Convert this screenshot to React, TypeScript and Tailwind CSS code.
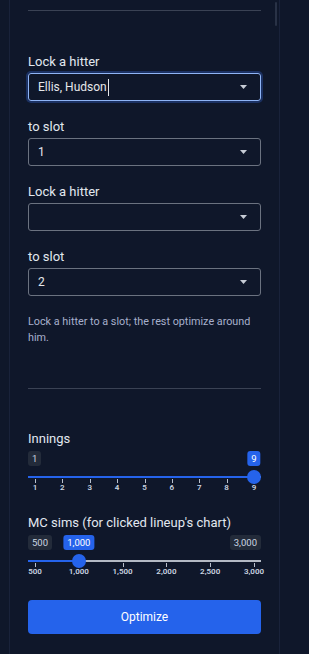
import React from "react";

const font = { fontFamily: "Roboto, 'Noto Sans', sans-serif" };

function Caret() {
  return (
    <svg width="7" height="4" viewBox="0 0 7 4" className="shrink-0">
      <path d="M0 0 L7 0 L3.5 4 Z" fill="#c7ccd6" />
    </svg>
  );
}

function Select({ value, focused }: { value: string; focused?: boolean }) {
  return (
    <div
      className={
        "h-[28px] rounded-[3px] border flex items-center justify-between pl-[9px] pr-[13px] text-[12px] text-[#e5e7eb] " +
        (focused
          ? "border-[#8fb4f5] shadow-[0_0_0_2px_#1b3163]"
          : "border-[#6b7280]")
      }
    >
      <span className="flex items-center">
        {value}
        {focused && <span className="ml-[1px] w-px h-[17px] bg-[#e5e7eb]" />}
      </span>
      <Caret />
    </div>
  );
}

function Field({
  label,
  value,
  focused,
}: {
  label: string;
  value: string;
  focused?: boolean;
}) {
  return (
    <div className="flex flex-col gap-[1px]">
      <label className="text-[13px] leading-[20px] text-[#e2e8f0]">{label}</label>
      <Select value={value} focused={focused} />
    </div>
  );
}

function Badge({ text, blue }: { text: string; blue?: boolean }) {
  return (
    <span
      className={
        "block h-[15px] px-[4px] rounded-[3px] text-[9.5px] leading-[15px] whitespace-nowrap " +
        (blue ? "bg-[#2563eb] text-white" : "bg-[#232b3a] text-[#cbd5e1]")
      }
    >
      {text}
    </span>
  );
}

function Slider({
  min,
  max,
  step,
  value,
  fmt,
}: {
  min: number;
  max: number;
  step: number;
  value: number;
  fmt: (n: number) => string;
}) {
  const x0 = 7;
  const span = 219;
  const pos = (v: number) => x0 + ((v - min) / (max - min)) * span;
  const ticks: number[] = [];
  for (let v = min; v <= max; v += step) ticks.push(v);
  const vx = pos(value);
  const atMax = value === max;

  return (
    <div className="relative h-[40px]">
      {/* min / max / value labels */}
      <div className="absolute left-0 top-0">
        <Badge text={fmt(min)} />
      </div>
      {!atMax && (
        <div className="absolute right-0 top-0">
          <Badge text={fmt(max)} />
        </div>
      )}
      <div
        className="absolute top-0 -translate-x-1/2"
        style={{ left: vx }}
      >
        <Badge text={fmt(value)} blue />
      </div>

      {/* track */}
      <div className="absolute left-0 right-0 top-[25px] h-[2px] bg-[#b3b9c4]" />
      <div
        className="absolute left-0 top-[25px] h-[2px] bg-[#2563eb]"
        style={{ width: vx }}
      />

      {/* ticks */}
      {ticks.map((t) => (
        <div key={t} className="absolute top-[28px]" style={{ left: pos(t) }}>
          <div className="w-px h-[4px] bg-[#b8bfcc]" />
          <div className="absolute top-[5px] left-0 -translate-x-1/2 text-[8px] leading-[8px] font-semibold text-[#cbd5e1] whitespace-nowrap">
            {fmt(t)}
          </div>
        </div>
      ))}

      {/* thumb */}
      <div
        className="absolute top-[19px] w-[14px] h-[14px] rounded-full bg-[#2563eb] -translate-x-1/2"
        style={{ left: vx }}
      />
    </div>
  );
}

const comma = (n: number) => n.toLocaleString("en-US");

export default function App() {
  return (
    <div className="relative min-h-screen w-full bg-[#0f172a] flex" style={font}>
      <div className="w-[9px] shrink-0" />
      <div className="w-[271px] shrink-0 border-l border-r border-[#19223a] px-[18px] pt-[10px]">
        <div className="h-px bg-[#3a4254]" />

        <div className="mt-[41px] flex flex-col gap-[16px]">
          <Field label="Lock a hitter" value="Ellis, Hudson" focused />
          <Field label="to slot" value="1" />
          <Field label="Lock a hitter" value="" />
          <Field label="to slot" value="2" />
        </div>

        <p className="mt-[18px] text-[10.8px] leading-[16px] text-[#a7b0cc]">
          Lock a hitter to a slot; the rest optimize around him.
        </p>

        <div className="mt-[42px] h-px bg-[#3a4254]" />

        <div className="mt-[40px] flex flex-col gap-[2px]">
          <label className="text-[13px] leading-[20px] text-[#e2e8f0]">Innings</label>
          <Slider min={1} max={9} step={1} value={9} fmt={(n) => String(n)} />
        </div>

        <div className="mt-[22px] flex flex-col gap-[2px]">
          <label className="text-[13px] leading-[20px] text-[#e2e8f0]">
            MC sims (for clicked lineup's chart)
          </label>
          <Slider min={500} max={3000} step={500} value={1000} fmt={comma} />
        </div>

        <button className="mt-[25px] w-full h-[34px] rounded-[4px] bg-[#2563eb] text-white text-[12px]">
          Optimize
        </button>
      </div>
      <div className="absolute left-[275px] top-[2px] w-[2px] h-[24px] rounded bg-[#293246]" />
    </div>
  );
}
